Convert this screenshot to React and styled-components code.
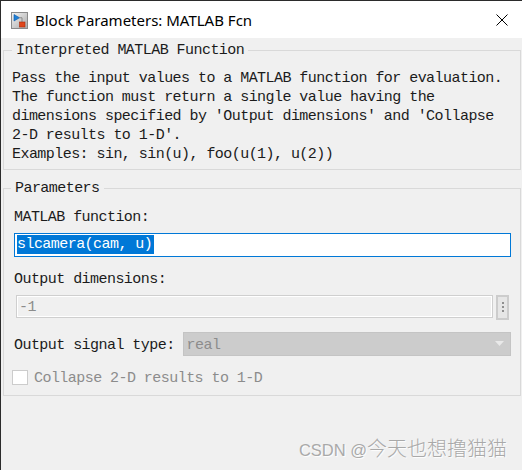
import styled, { createGlobalStyle } from "styled-components";

const GlobalStyle = createGlobalStyle`
  html, body {
    margin: 0;
    padding: 0;
    background: #f0f0f0;
  }
`;

const Window = styled.div`
  position: relative;
  width: 522px;
  height: 470px;
  box-sizing: border-box;
  border-left: 1px solid #2b2b2b;
  border-top: 1px solid #2b2b2b;
  background: #f0f0f0;
  display: flex;
  flex-direction: column;
  overflow: hidden;
`;

const TitleBar = styled.div`
  height: 37px;
  flex-shrink: 0;
  background: #ffffff;
  display: flex;
  align-items: center;
  padding: 1px 14px 0 10px;
  box-sizing: border-box;
  gap: 7px;
`;

const Title = styled.span`
  flex: 1;
  font-family: "Noto Sans", "Open Sans", sans-serif;
  font-size: 15px;
  color: #000;
`;

const Body = styled.div`
  padding: 3px 1px 0 2px;
  display: flex;
  flex-direction: column;
  gap: 9px;
  font-family: "Liberation Mono", monospace;
  font-size: 15px;
  letter-spacing: -0.55px;
  line-height: 19px;
  color: #1b1b1b;
`;

const Group = styled.fieldset`
  margin: 0;
  min-width: 0;
  border: 1px solid #d9d9d9;
  padding: 0 9px ${({ $pb }) => $pb}px ${({ $pl }) => $pl}px;
  display: flex;
  flex-direction: column;
`;

const Legend = styled.legend`
  padding: 0 4px;
  margin-left: ${({ $offset }) => $offset}px;
  line-height: 19px;
`;

const Para = styled.div`
  margin-top: 9px;
  white-space: pre;
`;

const Label = styled.div`
  margin-top: ${({ $mt }) => $mt}px;
  white-space: pre;
`;

const TextInput = styled.div`
  margin-top: 5.5px;
  height: 24px;
  box-sizing: border-box;
  border: 1px solid #0078d7;
  background: #fff;
  display: flex;
  align-items: center;
  padding-left: 2px;
`;

const Selected = styled.span`
  background: #0078d7;
  color: #fff;
  line-height: 18px;
  padding: 1px 2px 0 0;
`;

const DimRow = styled.div`
  margin-top: 5.5px;
  display: flex;
  align-items: flex-start;
  gap: 3px;
  padding: 0 2px;
`;

const DimField = styled.div`
  flex: 1;
  height: 23px;
  box-sizing: border-box;
  border: 1px solid #cfcfcf;
  box-shadow: inset 0 0 0 1px #ffffff;
  background: #f0f0f0;
  color: #8c8c8c;
  display: flex;
  align-items: center;
  padding: 2px 0 0 2px;
`;

const MoreButton = styled.div`
  width: 13px;
  height: 25px;
  box-sizing: border-box;
  border: 2px solid #cccccc;
  background: #e6e6e6;
  display: flex;
  flex-direction: column;
  align-items: center;
  justify-content: center;
  gap: 2px;
`;

const Dot = styled.span`
  width: 2px;
  height: 2px;
  background: #8f8f8f;
`;

const SignalRow = styled.div`
  margin-top: 12px;
  display: flex;
  align-items: center;
  gap: 8px;
`;

const RowText = styled.span`
  padding-top: ${({ $pt = 3 }) => $pt}px;
  white-space: pre;
`;

const Select = styled.div`
  flex: 1;
  height: 24px;
  box-sizing: border-box;
  background: #cccccc;
  border: 1px solid #c4c4c4;
  color: #8c8c8c;
  display: flex;
  align-items: center;
  justify-content: space-between;
  padding: 0 6px 0 3px;
`;

const CheckRow = styled.div`
  margin-top: 14px;
  margin-left: -2px;
  display: flex;
  align-items: center;
  gap: 6px;
  height: 15px;
  color: #8c8c8c;
`;

const Box = styled.span`
  width: 16px;
  height: 15px;
  box-sizing: border-box;
  background: #fff;
  border: 1px solid #cccccc;
`;

const Watermark = styled.div`
  position: absolute;
  right: 15px;
  bottom: 8px;
  color: #a9a9a9;
  text-shadow: 1px 1px 1px #ffffff;
  display: flex;
  align-items: baseline;
`;

const Latin = styled.span`
  font-family: "Liberation Sans", sans-serif;
  font-size: 16.5px;
  white-space: pre;
`;

const Cjk = styled.span`
  font-family: "Noto Sans CJK SC", sans-serif;
  font-size: 20px;
  font-weight: 300;
`;

const BlockIcon = () => (
  <svg width="17" height="17" viewBox="0 0 17 17">
    <defs>
      <linearGradient id="bg" x1="0" y1="0" x2="1" y2="1">
        <stop offset="0" stopColor="#f4f4f4" />
        <stop offset="1" stopColor="#a9a9a9" />
      </linearGradient>
    </defs>
    <rect x="0.5" y="0.5" width="16" height="16" fill="url(#bg)" stroke="#8a8a8a" />
    <path d="M3 2.5 L3 9 L8.5 5.75 Z" fill="#1f7fd6" stroke="#0d5ca8" strokeWidth="0.6" />
    <path d="M8.5 5.75 L11 5.75 L11 10" fill="none" stroke="#7a7a7a" strokeWidth="0.8" />
    <rect x="8.5" y="10" width="5.5" height="5" fill="#e0461c" stroke="#a82b0c" strokeWidth="0.6" />
  </svg>
);

const CloseIcon = () => (
  <svg width="12" height="12" viewBox="0 0 12 12">
    <path d="M0.5 0.5 L11.5 11.5 M11.5 0.5 L0.5 11.5" stroke="#000" strokeWidth="1" />
  </svg>
);

const Arrow = () => (
  <svg width="9" height="5" viewBox="0 0 9 5">
    <path d="M0 0 L9 0 L4.5 5 Z" fill="#e9e9e9" />
  </svg>
);

const App = () => {
  return (
    <Window>
      <GlobalStyle />
      <TitleBar>
        <BlockIcon />
        <Title>Block Parameters: MATLAB Fcn</Title>
        <CloseIcon />
      </TitleBar>

      <Body>
        <Group $pl={8} $pb={5}>
          <Legend $offset={0}>Interpreted MATLAB Function</Legend>
          <Para>
            {"Pass the input values to a MATLAB function for evaluation.\n"}
            {"The function must return a single value having the\n"}
            {"dimensions specified by 'Output dimensions' and 'Collapse\n"}
            {"2-D results to 1-D'.\n"}
            {"Examples: sin, sin(u), foo(u(1), u(2))"}
          </Para>
        </Group>

        <Group $pl={10} $pb={10}>
          <Legend $offset={-3}>Parameters</Legend>
          <Label $mt={10}>MATLAB function:</Label>
          <TextInput>
            <Selected>slcamera(cam, u)</Selected>
          </TextInput>
          <Label $mt={13.5}>Output dimensions:</Label>
          <DimRow>
            <DimField>-1</DimField>
            <MoreButton>
              <Dot />
              <Dot />
              <Dot />
            </MoreButton>
          </DimRow>
          <SignalRow>
            <RowText>Output signal type:</RowText>
            <Select>
              <RowText>real</RowText>
              <Arrow />
            </Select>
          </SignalRow>
          <CheckRow>
            <Box />
            <RowText $pt={2}>Collapse 2-D results to 1-D</RowText>
          </CheckRow>
        </Group>
      </Body>

      <Watermark>
        <Latin>CSDN @</Latin>
        <Cjk>今天也想撸猫猫</Cjk>
      </Watermark>
    </Window>
  );
};

export default App;
